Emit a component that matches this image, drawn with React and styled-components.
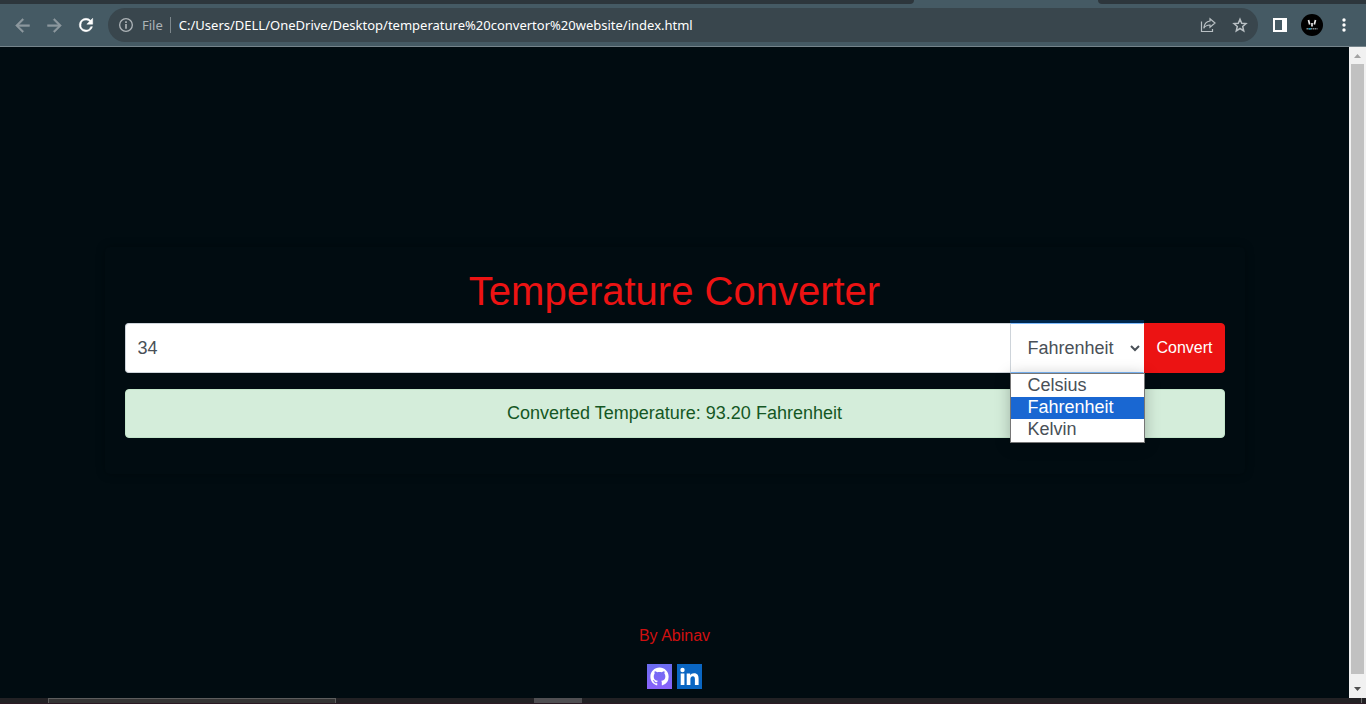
import React, { useState } from "react";
import styled, { createGlobalStyle } from "styled-components";

const GlobalStyle = createGlobalStyle`
  *, *::before, *::after { box-sizing: border-box; }
  body {
    margin: 0;
    background: #010c11;
    font-family: "Liberation Sans", Arial, sans-serif;
    font-size: 16px;
    line-height: 24px;
  }
  h1, p, ul { margin: 0; padding: 0; }
`;

const Window = styled.div`
  display: flex;
  flex-direction: column;
  height: 100vh;
  overflow: hidden;
`;

const TabStrip = styled.div`
  display: flex;
  flex: none;
  height: 4px;
  background: #455a64;
`;

const InactiveTabs = styled.div`
  flex: ${(p) => p.$grow} 1 0;
  background: #2d363c;
  border-radius: ${(p) => (p.$side === "left" ? "0 0 6px 0" : "0 0 0 6px")};
`;

const ActiveTab = styled.div`
  flex: none;
  width: 184px;
`;

const Toolbar = styled.header`
  display: flex;
  flex: none;
  align-items: center;
  height: 43px;
  padding: 0 6px;
  background: #455a64;
  border-bottom: 1px solid #75848b;
`;

const IconButton = styled.button`
  display: flex;
  flex: none;
  align-items: center;
  justify-content: center;
  width: 32px;
  height: 32px;
  padding: 0;
  border: 0;
  background: none;
  color: ${(p) => (p.$dim ? "#8d989e" : "#ffffff")};
`;

const NavButtons = styled.nav`
  display: flex;
  flex: none;
  margin-right: 6px;
`;

const AddressBar = styled.div`
  display: flex;
  flex: 1;
  align-items: center;
  min-width: 0;
  height: 34px;
  padding: 0 2px 0 10px;
  border-radius: 17px;
  background: #39464d;
  color: #adb3b7;
`;

const Scheme = styled.span`
  margin-left: 8px;
  padding-right: 7px;
  border-right: 1px solid #7d878c;
  font: 13px/16px "Noto Sans", "Open Sans", sans-serif;
`;

const UrlInput = styled.input`
  flex: 1;
  min-width: 0;
  height: 24px;
  padding: 0 8px;
  border: 0;
  outline: 0;
  background: none;
  color: #ffffff;
  font: 13px/16px "Noto Sans", "Open Sans", sans-serif;
`;

const Actions = styled.div`
  display: flex;
  flex: none;
  margin-left: 6px;
`;

const Viewport = styled.div`
  display: flex;
  flex: 1;
  min-height: 0;
`;

const Page = styled.main`
  display: flex;
  flex: 1;
  flex-direction: column;
  min-width: 0;
  padding: 200px 15px 9px;
  background: #010c11;
`;

const Card = styled.section`
  width: 100%;
  max-width: 1140px;
  margin: 0 auto;
  padding: 20px;
  border-radius: 5px;
  box-shadow: 0 0 10px rgba(0, 0, 0, 0.3);
`;

const Title = styled.h1`
  margin-bottom: 8px;
  color: #ec1313;
  font-size: 40px;
  font-weight: 400;
  line-height: 48px;
  text-align: center;
`;

const InputGroup = styled.form`
  display: flex;
  height: 50px;
  margin-bottom: 16px;
`;

const ValueInput = styled.input`
  flex: 1;
  min-width: 0;
  padding: 6px 12px;
  border: 1px solid #ced4da;
  border-right: 0;
  border-radius: 4px 0 0 4px;
  outline: 0;
  background: #ffffff;
  color: #495057;
  font: 18px/24px "Liberation Sans", Arial, sans-serif;
`;

const SelectWrap = styled.div`
  position: relative;
  flex: none;
  width: 134px;
`;

const UnitSelect = styled.select`
  width: 100%;
  height: 50px;
  padding: 6px 0 6px 12px;
  border: 1px solid #80bdff;
  border-left-color: #ced4da;
  border-right-color: #ffffff;
  border-radius: 0;
  outline: 0;
  box-shadow: 0 -3px 0 0 #00274d;
  background: #ffffff;
  color: #495057;
  font: 18px/24px "Liberation Sans", Arial, sans-serif;
`;

const OptionList = styled.ul`
  position: absolute;
  z-index: 2;
  top: 100%;
  left: 0;
  width: 135px;
  padding: 1px 0;
  border: 1px solid #767676;
  background: #ffffff;
  box-shadow: 0 2px 14px rgba(0, 0, 0, 0.25);
  list-style: none;
`;

const OptionItem = styled.li`
  height: 22px;
  padding-left: 16px;
  background: ${(p) => (p.$active ? "#1967d2" : "#ffffff")};
  color: ${(p) => (p.$active ? "#ffffff" : "#495057")};
  font-size: 18px;
  line-height: 20px;
`;

const ConvertButton = styled.button`
  flex: none;
  padding: 6px 11px;
  border: 1px solid #ec1313;
  border-radius: 0 4px 4px 0;
  background: #ec1313;
  color: #ffffff;
  font: 16px/24px "Liberation Sans", Arial, sans-serif;
`;

const Result = styled.output`
  display: block;
  margin-bottom: 16px;
  padding: 12px;
  border: 1px solid #c3e6cb;
  border-radius: 4px;
  background: #d4edda;
  color: #155724;
  font-size: 18px;
  line-height: 23px;
  text-align: center;
`;

const Footer = styled.footer`
  margin-top: auto;
  color: #d01010;
  text-align: center;
`;

const Links = styled.div`
  display: flex;
  justify-content: center;
  gap: 5px;
  margin-top: 16px;
`;

const SocialLink = styled.a`
  display: block;
  width: 25px;
  height: 25px;
  background: ${(p) => p.$tint};
  svg { display: block; }
`;

const ScrollBar = styled.div`
  display: flex;
  flex: none;
  flex-direction: column;
  align-items: center;
  width: 17px;
  background: #f1f1f1;
`;

const ScrollArrow = styled.svg`
  flex: none;
  width: 17px;
  height: 17px;
`;

const ScrollThumb = styled.div`
  flex: 1;
  width: 13px;
  margin-bottom: 7px;
  background: #c1c1c1;
`;

const TaskBar = styled.div`
  display: flex;
  flex: none;
  height: 6px;
  padding-left: 48px;
  background: #222124;
  border-bottom: 1px solid #2b1a24;
`;

const TaskSearch = styled.div`
  width: 288px;
  margin-right: 198px;
  border: 1px solid #5d5d5d;
  border-bottom: 0;
  background: #343434;
`;

const TaskItem = styled.div`
  width: 48px;
  background: #504f52;
`;

const ShowDesktop = styled.div`
  width: 5px;
  margin-left: auto;
  border-left: 1px solid #6b6b6b;
`;

const Stroke = ({ size = 24, width = 2, children }) => (
  <svg width={size} height={size} viewBox="0 0 24 24" fill="none" stroke="currentColor" strokeWidth={width} aria-hidden="true">
    {children}
  </svg>
);

const units = ["Celsius", "Fahrenheit", "Kelvin"];

const convert = (celsius, unit) => {
  if (unit === "Fahrenheit") return (celsius * 9) / 5 + 32;
  if (unit === "Kelvin") return celsius + 273.15;
  return celsius;
};

export default function App() {
  const [value, setValue] = useState("34");
  const [unit, setUnit] = useState("Fahrenheit");
  const [url, setUrl] = useState("C:/Users/DELL/OneDrive/Desktop/temperature%20convertor%20website/index.html");

  return (
    <Window>
      <GlobalStyle />
      <TabStrip>
        <InactiveTabs $grow={914} $side="left" />
        <ActiveTab />
        <InactiveTabs $grow={268} $side="right" />
      </TabStrip>
      <Toolbar>
        <NavButtons>
          <IconButton $dim aria-label="Back">
            <svg width="21" height="21" viewBox="0 0 24 24" fill="currentColor" stroke="currentColor" strokeWidth=".5"><path d="M20 11H7.83l5.59-5.59L12 4l-8 8 8 8 1.41-1.41L7.83 13H20v-2z" /></svg>
          </IconButton>
          <IconButton $dim aria-label="Forward">
            <svg width="21" height="21" viewBox="0 0 24 24" fill="currentColor" stroke="currentColor" strokeWidth=".5"><path d="M12 4l-1.410 1.410L16.170 11H4v2h12.170l-5.580 5.590L12 20l8-8-8-8z" /></svg>
          </IconButton>
          <IconButton aria-label="Reload">
            <svg width="20" height="20" viewBox="0 0 24 24" fill="currentColor" stroke="currentColor" strokeWidth=".6"><path d="M17.65 6.35A7.96 7.96 0 0 0 12 4a8 8 0 1 0 7.73 10h-2.08A6 6 0 1 1 12 6c1.66 0 3.14.69 4.22 1.78L13 11h7V4l-2.35 2.35z" /></svg>
          </IconButton>
        </NavButtons>
        <AddressBar>
          <Stroke size={16}><circle cx="12" cy="12" r="9.500" /><path d="M12 10.500v7M12 6.500v2.500" strokeWidth="2.500" /></Stroke>
          <Scheme>File</Scheme>
          <UrlInput aria-label="Address" value={url} onChange={(e) => setUrl(e.target.value)} />
          <IconButton $dim aria-label="Share">
            <svg width="16" height="16" viewBox="0 0 16 16" fill="none" stroke="#b9c0c4" strokeWidth="1.200"><path d="M1.500 4.500v10h11V12" /><path d="M10 1.800l5 4.200-5 4.200V8C7 8 5 9 3.800 11.200 4.200 7 6.500 4.500 10 4z" /></svg>
          </IconButton>
          <IconButton $dim aria-label="Bookmark">
            <svg width="16" height="16" viewBox="0 0 16 16" fill="none" stroke="#b9c0c4" strokeWidth="1.500"><path d="M8 2.200l1.700 4 4.300.4-3.300 2.900 1 4.300L8 11.500l-3.700 2.300 1-4.300L2 6.600l4.300-.4z" /></svg>
          </IconButton>
        </AddressBar>
        <Actions>
          <IconButton aria-label="Side panel">
            <svg width="14" height="14" viewBox="0 0 14 14"><path fill="#fff" fillRule="evenodd" d="M0 0h14v14H0zM2 2v10h7V2z" /></svg>
          </IconButton>
          <IconButton aria-label="Profile">
            <svg width="22" height="22" viewBox="0 0 22 22">
              <circle cx="11" cy="11" r="11" fill="#000" />
              <path d="M7.500 6l1.200 4.500M14.500 6l-1.200 4.500M11 9v3.500" stroke="#e8e8e8" strokeWidth="1.700" />
              <path d="M5.500 14.800h11" stroke="#7d8487" strokeWidth="1.500" strokeDasharray="1.500 .5" />
              <path d="M7.500 14.800h2.500" stroke="#1b94b5" strokeWidth="1.500" />
            </svg>
          </IconButton>
          <IconButton aria-label="Menu">
            <svg width="4" height="14" viewBox="0 0 4 14" fill="#fff"><circle cx="2" cy="2" r="1.700" /><circle cx="2" cy="7" r="1.700" /><circle cx="2" cy="12" r="1.700" /></svg>
          </IconButton>
        </Actions>
      </Toolbar>
      <Viewport>
        <Page>
          <Card>
            <Title>Temperature Converter</Title>
            <InputGroup onSubmit={(e) => e.preventDefault()}>
              <ValueInput aria-label="Temperature" value={value} onChange={(e) => setValue(e.target.value)} />
              <SelectWrap>
                <UnitSelect aria-label="Unit" value={unit} onChange={(e) => setUnit(e.target.value)}>
                  {units.map((u) => <option key={u}>{u}</option>)}
                </UnitSelect>
                <OptionList>
                  {units.map((u) => (
                    <OptionItem key={u} $active={u === unit} onClick={() => setUnit(u)}>{u}</OptionItem>
                  ))}
                </OptionList>
              </SelectWrap>
              <ConvertButton type="submit">Convert</ConvertButton>
            </InputGroup>
            <Result>Converted Temperature: {convert(Number(value), unit).toFixed(2)} {unit}</Result>
          </Card>
          <Footer>
            <p>By Abinav</p>
            <Links>
              <SocialLink href="#github" aria-label="GitHub" $tint="linear-gradient(#6a6df0, #8a63fb)">
                <svg width="25" height="25" viewBox="0 0 25 25"><path transform="translate(3.400 3.600) scale(1.140)" fill="#fff" d="M8 0C3.580 0 0 3.580 0 8c0 3.540 2.290 6.530 5.470 7.590.4.070.55-.17.55-.38 0-.19-.01-.82-.01-1.490-2.010.37-2.530-.49-2.690-.94-.09-.23-.48-.94-.82-1.130-.28-.15-.68-.52-.01-.53.63-.01 1.080.58 1.230.82.72 1.210 1.870.87 2.330.66.07-.52.28-.87.51-1.070-1.780-.2-3.640-.89-3.640-3.950 0-.87.31-1.590.82-2.150-.08-.2-.36-1.020.08-2.120 0 0 .67-.21 2.200.82.64-.18 1.320-.27 2-.27s1.360.09 2 .27c1.530-1.040 2.200-.82 2.200-.82.44 1.100.16 1.920.08 2.120.51.56.82 1.270.82 2.150 0 3.070-1.870 3.750-3.650 3.950.29.25.54.73.54 1.480 0 1.070-.01 1.930-.01 2.200 0 .21.15.46.55.38A8.010 8.010 0 0 0 16 8c0-4.420-3.580-8-8-8z" /></svg>
              </SocialLink>
              <SocialLink href="#linkedin" aria-label="LinkedIn" $tint="#0a66c2">
                <svg width="25" height="25" viewBox="0 0 25 25" fill="#fff"><circle cx="5.500" cy="6" r="2.200" /><path d="M3.700 9.500h3.700V21H3.700zM9.700 9.500h3.500v1.700c.6-1.100 1.900-2 3.800-2 3.700 0 4.600 2.400 4.600 5.500V21h-3.700v-5.500c0-1.700-.2-3.200-2-3.200s-2.500 1.300-2.500 3.100V21H9.700z" /></svg>
              </SocialLink>
            </Links>
          </Footer>
        </Page>
        <ScrollBar>
          <ScrollArrow viewBox="0 0 17 17"><path d="M5 11l3.500-4 3.500 4z" fill="#a3a3a3" /></ScrollArrow>
          <ScrollThumb />
          <ScrollArrow viewBox="0 0 17 17"><path d="M5 6l3.500 4L12 6z" fill="#505050" /></ScrollArrow>
        </ScrollBar>
      </Viewport>
      <TaskBar>
        <TaskSearch />
        <TaskItem />
        <ShowDesktop />
      </TaskBar>
    </Window>
  );
}
